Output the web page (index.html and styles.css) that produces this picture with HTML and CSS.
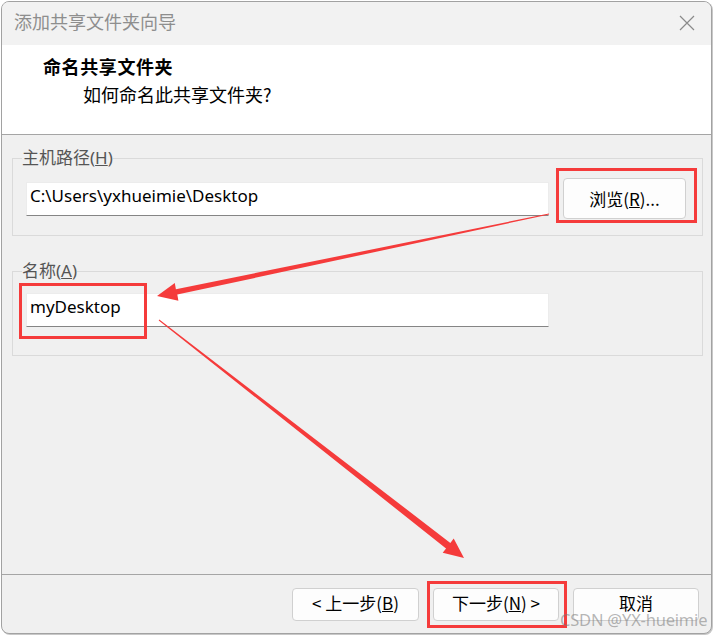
FILE: index.html
```html
<!DOCTYPE html>
<html lang="zh-CN">
<head>
<meta charset="utf-8">
<title>添加共享文件夹向导</title>
<link rel="stylesheet" href="styles.css">
</head>
<body>
<div class="window">
  <div class="titlebar">
    <span class="title">添加共享文件夹向导</span>
    <svg class="close" width="16" height="16" viewBox="0 0 16 16"><path d="M1 1 L15 15 M15 1 L1 15" stroke="#8a8a8a" stroke-width="1.2" fill="none"/></svg>
  </div>
  <div class="header">
    <div class="heading">命名共享文件夹</div>
    <div class="subheading">如何命名此共享文件夹?</div>
  </div>
  <div class="content">
    <fieldset class="group group-path">
      <legend>主机路径(<u>H</u>)</legend>
      <div class="row">
        <div class="input">C:\Users\yxhueimie\Desktop</div>
        <button class="btn btn-browse">浏览(<u>R</u>)...</button>
      </div>
    </fieldset>
    <fieldset class="group group-name">
      <legend>名称(<u>A</u>)</legend>
      <div class="row">
        <div class="input">myDesktop</div>
      </div>
    </fieldset>
  </div>
  <div class="footer">
    <button class="btn btn-nav">&lt; 上一步(<u>B</u>)</button>
    <button class="btn btn-nav">下一步(<u>N</u>) &gt;</button>
    <button class="btn btn-nav">取消</button>
  </div>
</div>

<div class="mark mark-browse"></div>
<div class="mark mark-name"></div>
<div class="mark mark-next"></div>

<svg class="arrows" width="714" height="635" viewBox="0 0 714 635">
  <polygon fill="#f53b3b" points="548.9,213.5 175.9,289.2 174.8,283.1 157,296 178.4,300.7 177.3,294.6 549.1,214.5"/>
  <polygon fill="#f53b3b" points="159.3,319.6 450.35,542.9 453.7,538.6 464,558 442.7,552.8 446.05,548.5 158.7,320.4"/>
</svg>

<div class="watermark">CSDN @YX-hueimie</div>
</body>
</html>
```
FILE: styles.css
```css
* { box-sizing: border-box; }

html, body {
  margin: 0;
  padding: 0;
  background: #ffffff;
  width: 714px;
  height: 635px;
  overflow: hidden;
}

body {
  font-family: "Noto Sans", "Noto Sans CJK SC", sans-serif;
  color: #000;
  position: relative;
}

.window {
  margin: 1px 0 0 1px;
  width: 711px;
  height: 633px;
  border: 1px solid #a2a2a2;
  border-radius: 8px;
  overflow: hidden;
  display: flex;
  flex-direction: column;
  background: #f0f0f0;
  box-shadow: 1px 1px 0 #c8c8c8;
}

.titlebar {
  height: 43px;
  flex: none;
  background: #f2f2f2;
  display: flex;
  align-items: center;
  justify-content: space-between;
  padding: 0 15px 5px 12px;
}

.title {
  font-family: "Noto Sans CJK SC", sans-serif;
  font-size: 18px;
  color: #8e8e8e;
  line-height: 24px;
}

.close { display: block; margin: 4px 1px 0 0; }

.header {
  height: 90px;
  flex: none;
  background: #ffffff;
  border-bottom: 1px solid #a5a5a5;
  padding: 9px 0 0 41px;
  font-family: "Noto Sans CJK SC", sans-serif;
}

.heading {
  font-size: 18px;
  font-weight: bold;
  line-height: 24px;
  letter-spacing: 0.6px;
}

.subheading {
  font-size: 18px;
  line-height: 24px;
  margin: 4px 0 0 40px;
}

.content {
  height: 439px;
  flex: none;
  padding: 13px 8px 0 10px;
}

.group {
  margin: 0;
  border: 1px solid #dadada;
  padding: 10px 13px 16px 13px;
  min-width: 0;
}

.group legend {
  font-family: "Noto Sans", "Noto Sans CJK SC", sans-serif;
  font-size: 17px;
  line-height: 20px;
  color: #555;
  padding: 0;
  margin-left: -4px;
}

.group-name {
  margin-top: 25px;
  padding-top: 12px;
  padding-bottom: 28px;
}

.row {
  display: flex;
  align-items: center;
  gap: 14px;
}

.input {
  width: 523px;
  height: 34px;
  background: #ffffff;
  border: 1px solid #ececec;
  border-bottom: 1px solid #858585;
  font-size: 17px;
  line-height: 25px;
  padding-left: 3px;
  white-space: nowrap;
}

.btn {
  font-family: "Noto Sans CJK SC", "Noto Sans", sans-serif;
  font-size: 17px;
  line-height: 20px;
  color: #000;
  background: #fdfdfd;
  border: 1px solid #d0d0d0;
  border-radius: 4px;
  padding: 0;
}

.btn-browse {
  width: 123px;
  height: 41px;
}

.footer {
  flex: 1;
  border-top: 1px solid #a5a5a5;
  display: flex;
  justify-content: flex-end;
  align-items: flex-start;
  gap: 14px;
  padding: 13px 12px 0 0;
}

.btn-nav {
  width: 126px;
  height: 33px;
  padding-bottom: 3px;
}

.btn-nav:first-child { width: 127px; }

.mark {
  position: absolute;
  border: 3px solid #f53b3b;
}

.mark-browse { left: 556px; top: 168px; width: 141px; height: 55px; }
.mark-name { left: 19px; top: 283px; width: 128px; height: 56px; }
.mark-next { left: 427px; top: 581px; width: 140px; height: 47px; }

.arrows {
  position: absolute;
  left: 0;
  top: 0;
  pointer-events: none;
}

.watermark {
  position: absolute;
  left: 560px;
  top: 613px;
  font-family: "Noto Sans", sans-serif;
  font-size: 16.5px;
  line-height: 14px;
  color: rgba(120, 120, 120, 0.55);
  white-space: nowrap;
  letter-spacing: -0.2px;
}
```
